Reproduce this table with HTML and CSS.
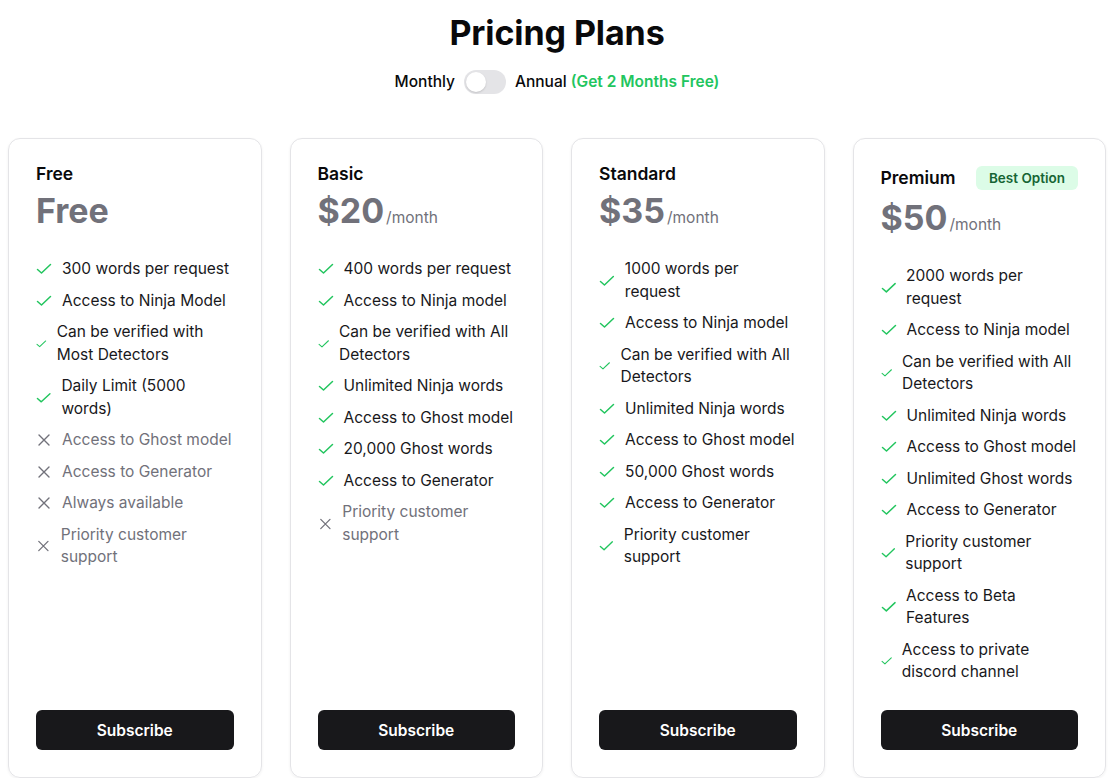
FILE: index.html
```html
<!DOCTYPE html>
<html>
<head>
<meta charset="utf-8">
<link rel="stylesheet" href="styles.css">
</head>
<body>
<main class="page">
  <h1 class="title">Pricing Plans</h1>
  <div class="billing">
    <span>Monthly</span>
    <span class="switch"><span class="knob"></span></span>
    <span>Annual <b class="promo">(Get 2 Months Free)</b></span>
  </div>

  <section class="plans">
    <article class="card">
      <div class="head"><h2 class="name">Free</h2></div>
      <div class="price"><span class="amount">Free</span></div>
      <ul class="features">
        <li class="yes"><svg viewBox="0 0 16 16"><path d="M1.5 8.5 5.5 12 14.5 3.5"/></svg><span>300 words per request</span></li>
        <li class="yes"><svg viewBox="0 0 16 16"><path d="M1.5 8.5 5.5 12 14.5 3.5"/></svg><span>Access to Ninja Model</span></li>
        <li class="yes"><svg viewBox="0 0 16 16"><path d="M1.5 8.5 5.5 12 14.5 3.5"/></svg><span>Can be verified with Most Detectors</span></li>
        <li class="yes"><svg viewBox="0 0 16 16"><path d="M1.5 8.5 5.5 12 14.5 3.5"/></svg><span>Daily Limit (5000 words)</span></li>
        <li class="no"><svg viewBox="0 0 16 16"><path d="M3 3l10 10M13 3 3 13"/></svg><span>Access to Ghost model</span></li>
        <li class="no"><svg viewBox="0 0 16 16"><path d="M3 3l10 10M13 3 3 13"/></svg><span>Access to Generator</span></li>
        <li class="no"><svg viewBox="0 0 16 16"><path d="M3 3l10 10M13 3 3 13"/></svg><span>Always available</span></li>
        <li class="no"><svg viewBox="0 0 16 16"><path d="M3 3l10 10M13 3 3 13"/></svg><span>Priority customer support</span></li>
      </ul>
      <button class="subscribe">Subscribe</button>
    </article>

    <article class="card">
      <div class="head"><h2 class="name">Basic</h2></div>
      <div class="price"><span class="amount">$20</span><span class="per">/month</span></div>
      <ul class="features">
        <li class="yes"><svg viewBox="0 0 16 16"><path d="M1.5 8.5 5.5 12 14.5 3.5"/></svg><span>400 words per request</span></li>
        <li class="yes"><svg viewBox="0 0 16 16"><path d="M1.5 8.5 5.5 12 14.5 3.5"/></svg><span>Access to Ninja model</span></li>
        <li class="yes"><svg viewBox="0 0 16 16"><path d="M1.5 8.5 5.5 12 14.5 3.5"/></svg><span>Can be verified with All Detectors</span></li>
        <li class="yes"><svg viewBox="0 0 16 16"><path d="M1.5 8.5 5.5 12 14.5 3.5"/></svg><span>Unlimited Ninja words</span></li>
        <li class="yes"><svg viewBox="0 0 16 16"><path d="M1.5 8.5 5.5 12 14.5 3.5"/></svg><span>Access to Ghost model</span></li>
        <li class="yes"><svg viewBox="0 0 16 16"><path d="M1.5 8.5 5.5 12 14.5 3.5"/></svg><span>20,000 Ghost words</span></li>
        <li class="yes"><svg viewBox="0 0 16 16"><path d="M1.5 8.5 5.5 12 14.5 3.5"/></svg><span>Access to Generator</span></li>
        <li class="no"><svg viewBox="0 0 16 16"><path d="M3 3l10 10M13 3 3 13"/></svg><span>Priority customer support</span></li>
      </ul>
      <button class="subscribe">Subscribe</button>
    </article>

    <article class="card">
      <div class="head"><h2 class="name">Standard</h2></div>
      <div class="price"><span class="amount">$35</span><span class="per">/month</span></div>
      <ul class="features">
        <li class="yes"><svg viewBox="0 0 16 16"><path d="M1.5 8.5 5.5 12 14.5 3.5"/></svg><span>1000 words per request</span></li>
        <li class="yes"><svg viewBox="0 0 16 16"><path d="M1.5 8.5 5.5 12 14.5 3.5"/></svg><span>Access to Ninja model</span></li>
        <li class="yes"><svg viewBox="0 0 16 16"><path d="M1.5 8.5 5.5 12 14.5 3.5"/></svg><span>Can be verified with All Detectors</span></li>
        <li class="yes"><svg viewBox="0 0 16 16"><path d="M1.5 8.5 5.5 12 14.5 3.5"/></svg><span>Unlimited Ninja words</span></li>
        <li class="yes"><svg viewBox="0 0 16 16"><path d="M1.5 8.5 5.5 12 14.5 3.5"/></svg><span>Access to Ghost model</span></li>
        <li class="yes"><svg viewBox="0 0 16 16"><path d="M1.5 8.5 5.5 12 14.5 3.5"/></svg><span>50,000 Ghost words</span></li>
        <li class="yes"><svg viewBox="0 0 16 16"><path d="M1.5 8.5 5.5 12 14.5 3.5"/></svg><span>Access to Generator</span></li>
        <li class="yes"><svg viewBox="0 0 16 16"><path d="M1.5 8.5 5.5 12 14.5 3.5"/></svg><span>Priority customer support</span></li>
      </ul>
      <button class="subscribe">Subscribe</button>
    </article>

    <article class="card">
      <div class="head head-badge"><h2 class="name">Premium</h2><span class="badge">Best Option</span></div>
      <div class="price"><span class="amount">$50</span><span class="per">/month</span></div>
      <ul class="features">
        <li class="yes"><svg viewBox="0 0 16 16"><path d="M1.5 8.5 5.5 12 14.5 3.5"/></svg><span>2000 words per request</span></li>
        <li class="yes"><svg viewBox="0 0 16 16"><path d="M1.5 8.5 5.5 12 14.5 3.5"/></svg><span>Access to Ninja model</span></li>
        <li class="yes"><svg viewBox="0 0 16 16"><path d="M1.5 8.5 5.5 12 14.5 3.5"/></svg><span>Can be verified with All Detectors</span></li>
        <li class="yes"><svg viewBox="0 0 16 16"><path d="M1.5 8.5 5.5 12 14.5 3.5"/></svg><span>Unlimited Ninja words</span></li>
        <li class="yes"><svg viewBox="0 0 16 16"><path d="M1.5 8.5 5.5 12 14.5 3.5"/></svg><span>Access to Ghost model</span></li>
        <li class="yes"><svg viewBox="0 0 16 16"><path d="M1.5 8.5 5.5 12 14.5 3.5"/></svg><span>Unlimited Ghost words</span></li>
        <li class="yes"><svg viewBox="0 0 16 16"><path d="M1.5 8.5 5.5 12 14.5 3.5"/></svg><span>Access to Generator</span></li>
        <li class="yes"><svg viewBox="0 0 16 16"><path d="M1.5 8.5 5.5 12 14.5 3.5"/></svg><span>Priority customer support</span></li>
        <li class="yes"><svg viewBox="0 0 16 16"><path d="M1.5 8.5 5.5 12 14.5 3.5"/></svg><span>Access to Beta Features</span></li>
        <li class="yes"><svg viewBox="0 0 16 16"><path d="M1.5 8.5 5.5 12 14.5 3.5"/></svg><span>Access to private discord channel</span></li>
      </ul>
      <button class="subscribe">Subscribe</button>
    </article>
  </section>
</main>
</body>
</html>
```

FILE: styles.css
```css
* { box-sizing: border-box; }

html, body {
  margin: 0;
  background: #ffffff;
  font-family: Inter, "Noto Sans", "Liberation Sans", sans-serif;
  color: #09090b;
}

.page {
  padding: 12px 8px 0;
  display: flex;
  flex-direction: column;
  align-items: center;
}

.title {
  margin: 0;
  font-size: 34px;
  line-height: 42px;
  font-weight: 700;
  letter-spacing: -0.1px;
}

.billing {
  margin-top: 16px;
  display: flex;
  align-items: center;
  gap: 9px;
  font-size: 15.5px;
  line-height: 22px;
  font-weight: 500;
}

.promo {
  color: #22c55e;
  font-weight: 600;
}

.switch {
  width: 42px;
  height: 24px;
  border-radius: 12px;
  background: #e4e4e7;
  padding: 2px;
  display: flex;
}

.knob {
  width: 20px;
  height: 20px;
  border-radius: 50%;
  background: #ffffff;
  box-shadow: 0 1px 2px rgba(0,0,0,0.15);
}

.plans {
  margin-top: 44px;
  width: 100%;
  display: grid;
  grid-template-columns: repeat(4, 1fr);
  gap: 28px;
}

.card {
  border: 1px solid #e4e4e7;
  border-radius: 12px;
  box-shadow: 0 1px 3px rgba(0,0,0,0.06);
  padding: 23px 27px 27px;
  display: flex;
  flex-direction: column;
  height: 640px;
}

.head {
  display: flex;
  align-items: center;
  justify-content: space-between;
  min-height: 24px;
}

.head-badge {
  min-height: 31px;
}

.name {
  margin: 0;
  font-size: 17.5px;
  line-height: 24px;
  font-weight: 600;
}

.badge {
  background: #dcfce7;
  color: #166534;
  font-size: 13.5px;
  font-weight: 600;
  line-height: 24px;
  padding: 0 13px;
  border-radius: 6px;
}

.price {
  margin-top: 3px;
  display: flex;
  align-items: baseline;
  color: #71717a;
}

.amount {
  font-size: 34px;
  line-height: 44px;
  font-weight: 700;
}

.per {
  font-size: 15.5px;
  margin-left: 2px;
}

.features {
  list-style: none;
  margin: 25px 0 0;
  padding: 0;
  display: flex;
  flex-direction: column;
  gap: 9px;
}

.features li {
  display: flex;
  align-items: center;
  gap: 10px;
  font-size: 15.5px;
  line-height: 22.5px;
}

.features svg {
  width: 16px;
  height: 16px;
  fill: none;
  stroke-width: 1.5;
  stroke-linecap: round;
  stroke-linejoin: round;
}

.yes svg { stroke: #22c55e; }
.yes { color: #18181b; }
.no svg { stroke: #71717a; stroke-width: 1.4; }
.no { color: #71717a; }

.subscribe {
  margin-top: auto;
  height: 40px;
  border: 0;
  border-radius: 6px;
  background: #18181b;
  color: #ffffff;
  font-family: inherit;
  font-size: 15.5px;
  font-weight: 600;
}
```
